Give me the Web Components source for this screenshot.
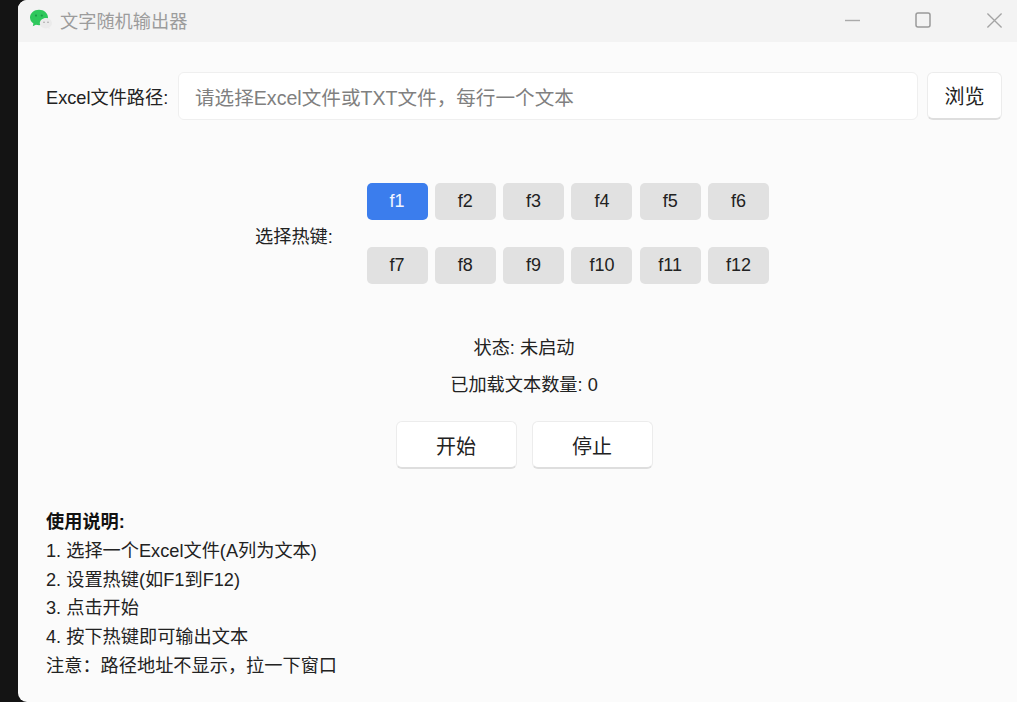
<!DOCTYPE html>
<html lang="zh">
<head>
<meta charset="utf-8">
<title>文字随机输出器</title>
<style>
	html,body{margin:0;height:100%;background:#141414;overflow:hidden;}
	body{display:flex;font-family:"Liberation Sans","Noto Sans CJK SC",sans-serif;color:#1f1f1f;}
</style>
</head>
<body>
<app-window title="文字随机输出器">
	<path-row></path-row>
	<hotkey-picker selected="f1"></hotkey-picker>
	<status-panel></status-panel>
	<help-notes></help-notes>
</app-window>

<script>
//component app-window
customElements.define('app-window',
	class extends HTMLElement {
		template() {
			return `
			<style>
				:host{display:flex;flex-direction:column;flex:1;margin-left:18px;height:702px;background:#fbfbfb;border-radius:9px 0 0 9px;overflow:hidden;}
				.titlebar{display:flex;align-items:center;box-sizing:border-box;height:42px;flex:none;background:#f3f3f3;padding:0 14px 2px 11px;}
				.logo{width:24px;height:22px;margin-right:7px;}
				.title{font-size:18.200px;color:#9c9c9c;flex:1;}
				.ctl{display:flex;margin-left:55px;}
				.body{flex:1;display:flex;flex-direction:column;padding:30px 15px 0 28px;}
			</style>
			<div class="titlebar">
				<svg class="logo" viewBox="0 0 24 22">
					<path fill="#2fc85c" d="M10 .8C5 .8 1 4.300 1 8.600c0 2.500 1.300 4.600 3.400 6l-.6 2.700 3.100-1.600c1 .3 2 .5 3.100.5 5 0 9-3.300 9-7.600S15 .8 10 .8z"/>
					<circle cx="7" cy="6.600" r="1.100" fill="#1c9a47"/><circle cx="12.800" cy="6.600" r="1.100" fill="#1c9a47"/>
					<path fill="#ebebeb" d="M17 9c-3.400 0-6.200 2.300-6.200 5.200s2.800 5.200 6.200 5.200c.7 0 1.300-.1 1.900-.3l2 1-.5-1.800c1.500-1 2.600-2.400 2.600-4.100C23 11.300 20.400 9 17 9z"/>
					<circle cx="15" cy="13.200" r=".8" fill="#a0a0a0"/><circle cx="19" cy="13.200" r=".8" fill="#a0a0a0"/>
				</svg>
				<span class="title"></span>
				<span class="ctl"><svg width="15" height="16" viewBox="0 0 15 16"><path d="M0 8.500h15" stroke="#aaa" stroke-width="1.400"/></svg></span>
				<span class="ctl"><svg width="16" height="16" viewBox="0 0 16 16"><rect x="1" y="1" width="14" height="14" rx="2" fill="none" stroke="#9a9a9a" stroke-width="1.500"/></svg></span>
				<span class="ctl"><svg width="17" height="17" viewBox="0 0 18 18"><path d="M1.500 1.500l15 15M16.500 1.500l-15 15" stroke="#a4a4a4" stroke-width="1.400"/></svg></span>
			</div>
			<div class="body"><slot></slot></div>
			`
		}

		constructor() {
			super()
			this.attachShadow({ mode: "open" })
			this.shadowRoot.innerHTML = this.template()
			this.shadowRoot.querySelector('.title').textContent = this.getAttribute('title')
		}
	}
)

//component push-button
customElements.define('push-button',
	class extends HTMLElement {
		template() {
			return `
			<style>
				:host{display:flex;align-items:center;justify-content:center;box-sizing:border-box;height:48px;width:121px;padding-top:1px;background:#fff;border:1px solid #ececec;border-bottom:2px solid #dedede;border-radius:6px;font-size:20px;color:#222;cursor:pointer;}
			</style>
			<slot></slot>
			`
		}

		constructor() {
			super()
			this.attachShadow({ mode: "open" })
			this.shadowRoot.innerHTML = this.template()
		}
	}
)

//component path-row
customElements.define('path-row',
	class extends HTMLElement {
		template() {
			return `
			<style>
				:host{display:flex;align-items:center;gap:9px;}
				.label{font-size:18.200px;color:#222;width:123px;white-space:nowrap;}
				.input{flex:1;box-sizing:border-box;height:48px;display:flex;align-items:center;padding-left:16px;background:#fff;border:1px solid #efefef;border-radius:6px;font-size:19.600px;color:#808080;}
				push-button{width:75px;padding-top:0;}
			</style>
			<span class="label">Excel文件路径:</span>
			<div class="input">请选择Excel文件或TXT文件，每行一个文本</div>
			<push-button>浏览</push-button>
			`
		}

		constructor() {
			super()
			this.attachShadow({ mode: "open" })
			this.shadowRoot.innerHTML = this.template()
		}
	}
)

//component hotkey-picker
customElements.define('hotkey-picker',
	class extends HTMLElement {
		template() {
			return `
			<style>
				:host{display:flex;align-items:center;margin:63px 0 0 209px;}
				.label{font-size:18.200px;color:#222;width:112px;white-space:nowrap;padding-top:3px;}
				.grid{display:grid;grid-template-columns:repeat(6,61px);column-gap:7.300px;row-gap:27px;margin-left:-.5px;}
				.key{display:flex;align-items:center;justify-content:center;height:37px;border-radius:5px;background:#e1e1e1;font-size:18px;color:#222;cursor:pointer;}
				.key.on{background:#3b7ded;color:#f2f6ff;}
			</style>
			<span class="label">选择热键:</span>
			<div class="grid"></div>
			`
		}

		connectedCallback() {
			const grid = this.shadowRoot.querySelector('.grid')
			const selected = this.getAttribute('selected')
			for (let i = 1; i <= 12; i++) {
				const key = document.createElement('div')
				key.className = 'key' + ('f' + i == selected ? ' on' : '')
				key.textContent = 'f' + i
				grid.append(key)
			}
		}

		constructor() {
			super()
			this.attachShadow({ mode: "open" })
			this.shadowRoot.innerHTML = this.template()
		}
	}
)

//component status-panel
customElements.define('status-panel',
	class extends HTMLElement {
		template() {
			return `
			<style>
				:host{display:flex;flex-direction:column;align-items:center;margin-top:46px;font-size:18.200px;color:#222;}
				.line{height:37px;line-height:37px;}
				.actions{display:flex;gap:15px;margin-top:17px;}
			</style>
			<div class="line">状态: 未启动</div>
			<div class="line">已加载文本数量: 0</div>
			<div class="actions">
				<push-button>开始</push-button>
				<push-button>停止</push-button>
			</div>
			`
		}

		constructor() {
			super()
			this.attachShadow({ mode: "open" })
			this.shadowRoot.innerHTML = this.template()
		}
	}
)

//component help-notes
customElements.define('help-notes',
	class extends HTMLElement {
		template() {
			return `
			<style>
				:host{display:block;margin-top:39px;font-size:18.200px;line-height:28.800px;color:#222;}
				b{display:block;color:#111;}
			</style>
			<b>使用说明:</b>
			<div>1. 选择一个Excel文件(A列为文本)</div>
			<div>2. 设置热键(如F1到F12)</div>
			<div>3. 点击开始</div>
			<div>4. 按下热键即可输出文本</div>
			<div>注意：路径地址不显示，拉一下窗口</div>
			`
		}

		constructor() {
			super()
			this.attachShadow({ mode: "open" })
			this.shadowRoot.innerHTML = this.template()
		}
	}
)
</script>
</body>
</html>
